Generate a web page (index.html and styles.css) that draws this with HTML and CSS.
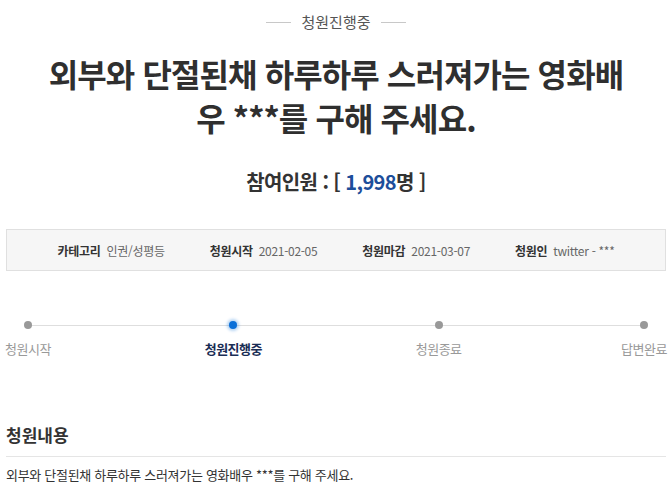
FILE: index.html
```html
<!DOCTYPE html>
<html lang="ko">
<head>
    <meta charset="UTF-8">
    <meta name="viewport" content="width=device-width, initial-scale=1.0">
    <title>청원진행중</title>
    <link rel="stylesheet" href="styles.css">
</head>
<body>
    <div class="page">
        <div class="status">
            <span class="status-line"></span>
            <span class="status-text">청원진행중</span>
            <span class="status-line"></span>
        </div>

        <h1 class="title">외부와 단절된채 하루하루 스러져가는 영화배<br>우 ***를 구해 주세요.</h1>

        <p class="count">참여인원 : [ <span class="num">1,998</span>명 ]</p>

        <ul class="info">
            <li><strong>카테고리</strong> 인권/성평등</li>
            <li><strong>청원시작</strong> 2021-02-05</li>
            <li><strong>청원마감</strong> 2021-03-07</li>
            <li><strong>청원인</strong> twitter - ***</li>
        </ul>

        <div class="progress">
            <div class="step">
                <span class="dot"></span>
                <span class="step-label">청원시작</span>
            </div>
            <div class="step active">
                <span class="dot"></span>
                <span class="step-label">청원진행중</span>
            </div>
            <div class="step">
                <span class="dot"></span>
                <span class="step-label">청원종료</span>
            </div>
            <div class="step">
                <span class="dot"></span>
                <span class="step-label">답변완료</span>
            </div>
        </div>

        <h2 class="section-title">청원내용</h2>
        <div class="content">외부와 단절된채 하루하루 스러져가는 영화배우 ***를 구해 주세요.</div>
    </div>
</body>
</html>
```

FILE: styles.css
```css
body { margin: 0; background: #fff; color: #333; font-family: "Noto Sans CJK KR", "Noto Sans", sans-serif; }
.page { padding: 0 4px 0 6px; }

.status { display: flex; align-items: center; justify-content: center; gap: 10px; padding-top: 12px; height: 20px; }
.status-line { width: 25px; height: 1px; background: #c8c8c8; }
.status-text { font-size: 15px; line-height: 20px; color: #555; }

.title { margin: 19px 0 0; text-align: center; font-size: 32px; line-height: 44px; font-weight: 700; color: #2f2f2f; letter-spacing: -0.9px; }

.count { margin: 29px 0 0; text-align: center; font-size: 20px; line-height: 28px; font-weight: 700; color: #333; letter-spacing: -0.6px; }
.count .num { color: #1d4e9a; }

.info { list-style: none; margin: 33px 0 0; padding: 0; height: 40px; display: flex; align-items: center; justify-content: center; gap: 45px; background: #f6f6f6; border: 1px solid #e0e0e0; font-size: 12px; color: #666; letter-spacing: -0.3px; }
.info strong { color: #333; margin-right: 3px; }

.progress { position: relative; margin: 50px 0 0; display: flex; justify-content: space-between; }
.progress::before { content: ""; position: absolute; left: 22px; right: 22px; top: 4px; height: 1px; background: #dedede; }
.step { position: relative; width: 44px; display: flex; flex-direction: column; align-items: center; }
.dot { width: 8px; height: 8px; border-radius: 50%; background: #999; }
.step-label { margin-top: 11px; font-size: 13px; line-height: 18px; color: #999; white-space: nowrap; letter-spacing: -0.5px; }
.step.active .dot { background: #0a6fd8; box-shadow: 0 0 3px 2px rgba(10, 111, 216, 0.3); }
.step.active .step-label { color: #1a2d55; font-weight: 700; }

.section-title { margin: 65px 0 0; padding-bottom: 9px; font-size: 17px; line-height: 24px; font-weight: 700; color: #333; border-bottom: 1px solid #e5e5e5; }
.content { margin-top: 8px; font-size: 13px; line-height: 20px; color: #333; letter-spacing: -0.3px; }
```
